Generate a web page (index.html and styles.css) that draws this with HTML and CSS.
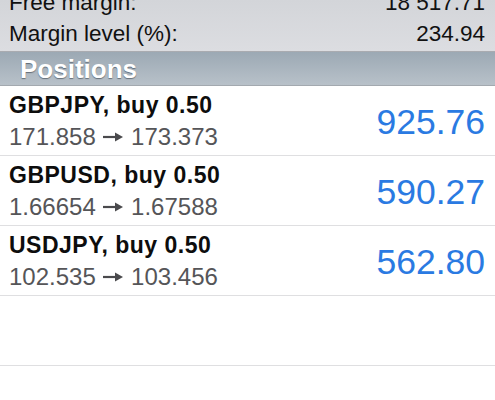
FILE: index.html
```html
<!DOCTYPE html>
<html>
<head>
<meta charset="utf-8">
<link rel="stylesheet" href="styles.css">
</head>
<body>
<div class="summary">
  <div class="sum-row"><span>Free margin:</span><span>18 517.71</span></div>
  <div class="sum-row"><span>Margin level (%):</span><span>234.94</span></div>
</div>
<div class="section-header">Positions</div>
<div class="list">
  <div class="pos-row">
    <div class="pos-info">
      <div class="pos-title">GBPJPY, buy 0.50</div>
      <div class="pos-prices">171.858 <svg class="arrow" viewBox="0 0 22 12" width="22" height="12"><path d="M1 6H15" stroke="#4a4a4d" stroke-width="2.2"/><path d="M13 1.5L21 6L13 10.5Z" fill="#4a4a4d"/></svg> 173.373</div>
    </div>
    <div class="pos-profit">925.76</div>
  </div>
  <div class="pos-row">
    <div class="pos-info">
      <div class="pos-title">GBPUSD, buy 0.50</div>
      <div class="pos-prices">1.66654 <svg class="arrow" viewBox="0 0 22 12" width="22" height="12"><path d="M1 6H15" stroke="#4a4a4d" stroke-width="2.2"/><path d="M13 1.5L21 6L13 10.5Z" fill="#4a4a4d"/></svg> 1.67588</div>
    </div>
    <div class="pos-profit">590.27</div>
  </div>
  <div class="pos-row">
    <div class="pos-info">
      <div class="pos-title">USDJPY, buy 0.50</div>
      <div class="pos-prices">102.535 <svg class="arrow" viewBox="0 0 22 12" width="22" height="12"><path d="M1 6H15" stroke="#4a4a4d" stroke-width="2.2"/><path d="M13 1.5L21 6L13 10.5Z" fill="#4a4a4d"/></svg> 103.456</div>
    </div>
    <div class="pos-profit">562.80</div>
  </div>
  <div class="pos-row empty"></div>
</div>
</body>
</html>
```
FILE: styles.css
```css
html, body {
  margin: 0;
  padding: 0;
  background: #ffffff;
  font-family: "Liberation Sans", Arial, sans-serif;
  width: 495px;
  height: 400px;
  overflow: hidden;
}
.summary {
  background: linear-gradient(#d3d5d9, #dcdde1);
  border-bottom: 1px solid #a9abb0;
  display: flex;
  flex-direction: column;
  justify-content: flex-end;
  padding: 0 10px 2px 9px;
  box-sizing: border-box;
  height: 52px;
  overflow: hidden;
  color: #111;
  font-size: 22.5px;
}
.sum-row {
  display: flex;
  justify-content: space-between;
  line-height: 31px;
  height: 31px;
  flex-shrink: 0;
}
.section-header {
  height: 34px;
  box-sizing: border-box;
  background: linear-gradient(#9ca9b4, #b8c1c9);
  border-bottom: 1px solid #a3a9af;
  color: #fff;
  font-weight: bold;
  font-size: 26px;
  line-height: 31px;
  padding: 2px 0 0 20px;
  text-shadow: 0 1px 1px rgba(40, 50, 60, 0.55);
}
.pos-row {
  height: 70px;
  box-sizing: border-box;
  border-bottom: 1px solid #dfdfe1;
  display: flex;
  align-items: center;
  justify-content: space-between;
  padding: 0 10px 0 9px;
}
.pos-info {
  align-self: flex-start;
  padding-top: 5px;
}
.pos-title {
  font-weight: bold;
  font-size: 23px;
  letter-spacing: 0.5px;
  line-height: 28px;
  color: #0d0d0d;
}
.pos-prices {
  font-size: 24px;
  line-height: 32px;
  margin-top: 2px;
  color: #555558;
}
.arrow {
  vertical-align: 2px;
}
.pos-profit {
  font-size: 35.5px;
  line-height: 40px;
  padding-top: 2px;
  color: #2a7ae2;
}
```
